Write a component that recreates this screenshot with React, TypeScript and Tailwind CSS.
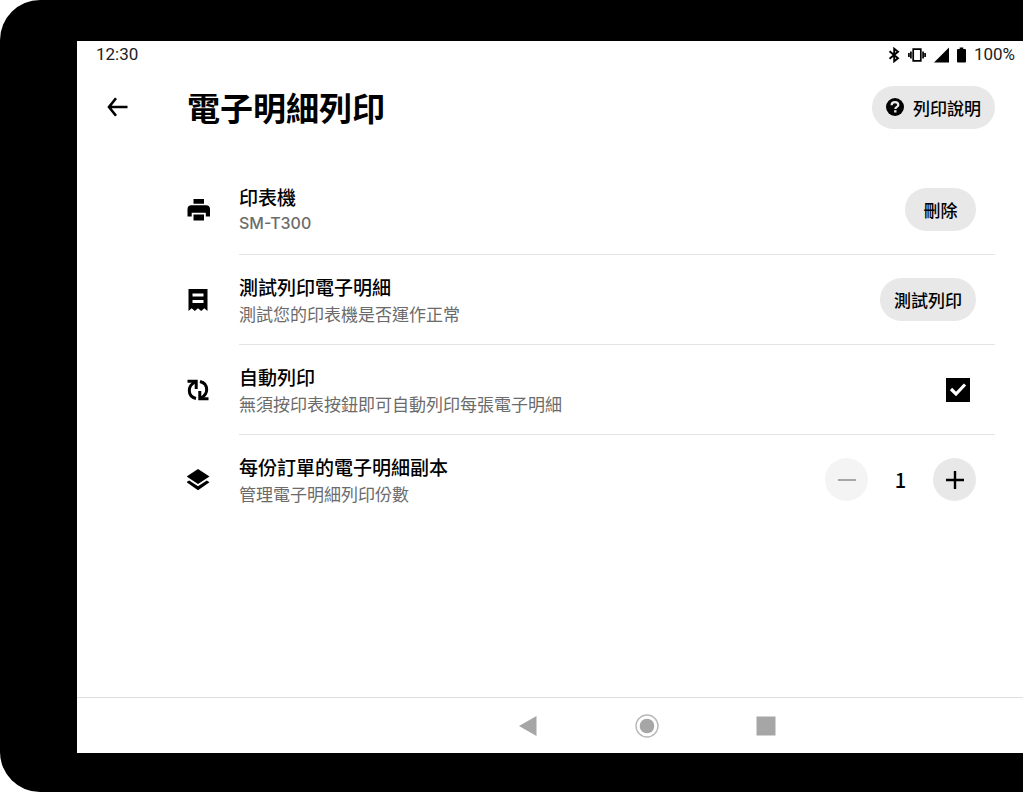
import type { ReactNode } from "react";
import { useState } from "react";

const BackArrowIcon = () => (
  <svg width="22" height="20" viewBox="0 0 22 20" fill="none" stroke="currentColor" strokeWidth="2.6" aria-hidden="true">
    <path d="M9 1.2 2 10l7 8.800M1.500 10H20.500" />
  </svg>
);

const HelpIcon = () => (
  <svg width="18" height="18" viewBox="0 0 18 18" aria-hidden="true">
    <circle cx="9" cy="9" r="9" fill="currentColor" />
    <path d="M5.600 7.200C5.600 5.200 7 4.200 9 4.200s3.300 1 3.300 2.700c0 2-3 2-3 4.100" fill="none" stroke="#e8e8e8" strokeWidth="2.200" />
    <rect x="8.100" y="12.200" width="2.400" height="2.300" fill="#e8e8e8" />
  </svg>
);

const PrinterIcon = () => (
  <svg width="24" height="24" viewBox="0 0 24 24" fill="currentColor" aria-hidden="true">
    <path d="M6.500 1h10.500v4.800h-10.500zM4.500 7.200h14.500a4 4 0 0 1 4 4v7.300h-4.200V14.700H4.700v3.800H.5v-7.300a4 4 0 0 1 4-4zM6.500 16.500h10.500v6h-10.500z" />
  </svg>
);

const ReceiptIcon = () => (
  <svg width="24" height="24" viewBox="0 0 24 24" fill="currentColor" aria-hidden="true">
    <path
      fillRule="evenodd"
      d="M1.500 1h19v22l-3.200-2.700-3.100 2.700-3.200-2.700L7.800 23l-3.100-2.700L1.500 23zM5.500 5.500v3h11v-3zm0 6.500v3h11v-3z"
    />
  </svg>
);

const SyncIcon = () => (
  <svg width="24" height="24" viewBox="0 0 24 24" fill="none" stroke="currentColor" strokeWidth="3" aria-hidden="true">
    <path d="M9 20.500C5 19.500 2.300 16.500 2.300 12.500c0-3.500 2-6.500 5.700-8.500" />
    <path d="M.5 3.200h8.700V11" />
    <path d="M13 3.500c4 1 6.700 4 6.700 8 0 3.500-2 6.500-5.700 8.500" />
    <path d="M21.500 20.800h-8.700V13" />
  </svg>
);

const LayersIcon = () => (
  <svg width="24" height="24" viewBox="0 0 24 24" fill="currentColor" aria-hidden="true">
    <path d="M11 1 22.500 8.500 11 16-.5 8.500zM-.5 14.200l2.700-1.800L11 18.300l8.800-5.900 2.700 1.800L11 22.300z" />
  </svg>
);

const StatusIcons = () => (
  <>
    <svg width="12" height="16" viewBox="0 0 12 16" fill="none" stroke="currentColor" strokeWidth="1.900" aria-hidden="true">
      <path d="M1.500 4.200 10 11.300 6.200 14.300V1.700L10 4.700 1.500 11.800" />
    </svg>
    <svg width="18" height="16" viewBox="0 0 18 16" fill="none" stroke="currentColor" strokeWidth="1.700" aria-hidden="true">
      <path d="M5.200 2.200h7.600v11.600H5.200zM2.900 4.500v7M15.100 4.500v7M.9 6v4M17.100 6v4" />
    </svg>
    <svg width="15" height="16" viewBox="0 0 15 16" fill="currentColor" aria-hidden="true">
      <path d="M15 .5v15H0z" />
    </svg>
    <svg width="9" height="16" viewBox="0 0 9 16" fill="currentColor" aria-hidden="true">
      <path d="M2.700.5h3.600V2H8a1 1 0 0 1 1 1v11.500a1 1 0 0 1-1 1H1a1 1 0 0 1-1-1V3a1 1 0 0 1 1-1h1.700z" />
    </svg>
  </>
);

const pillClass =
  "h-[43px] min-w-[71px] rounded-full bg-[#e8e8e8] px-[14px] text-[17px] font-medium leading-none cursor-pointer";

type SettingRowProps = {
  icon: ReactNode;
  title: ReactNode;
  detail: string;
  detailClass?: string;
  children: ReactNode;
};

const SettingRow = ({ icon, title, detail, detailClass = "text-[17px]", children }: SettingRowProps) => (
  <li className="group flex items-center">
    <div className="w-[52px] shrink-0">{icon}</div>
    <div className="flex min-h-[90px] flex-1 items-center justify-between gap-4 border-b border-[#e4e4e4] pr-[19px] group-last:border-transparent">
      <div>
        <h2 className="text-[19px] font-medium leading-[27px]">{title}</h2>
        <p className={`leading-[27px] text-[#6b6b6b] ${detailClass}`}>{detail}</p>
      </div>
      {children}
    </div>
  </li>
);

export default function App() {
  const [autoPrint, setAutoPrint] = useState(true);
  const [copies, setCopies] = useState(1);

  return (
    <div className="min-h-screen bg-white pr-px font-['Noto_Sans_CJK_TC',sans-serif] text-black">
      <div className="flex min-h-screen flex-col rounded-l-[40px] bg-black pt-[41px] pb-[39px] pl-[77px]">
        <div className="flex flex-1 flex-col bg-white">
          <div className="flex h-7 items-center justify-between pr-2 pl-[19px] font-[Roboto,sans-serif] text-[17px] text-[#222222]">
            <span>12:30</span>
            <div className="flex items-center gap-2 text-black">
              <StatusIcons />
              <span className="text-[#222222]">100%</span>
            </div>
          </div>

          <header className="flex h-[76px] items-center pr-7 pl-[30px]">
            <button type="button" aria-label="返回" className="w-20 cursor-pointer">
              <BackArrowIcon />
            </button>
            <h1 className="flex-1 text-[33px] font-bold leading-10">電子明細列印</h1>
            <button type="button" className={`flex items-center gap-[9px] ${pillClass}`}>
              <HelpIcon />
              列印說明
            </button>
          </header>

          <main className="flex-1 pt-5 pr-7 pl-[110px]">
            <ul>
              <SettingRow
                icon={<PrinterIcon />}
                title="印表機"
                detail="SM-T300"
                detailClass="font-[Inter,sans-serif] text-[16px] font-medium"
              >
                <button type="button" className={pillClass}>
                  刪除
                </button>
              </SettingRow>
              <SettingRow icon={<ReceiptIcon />} title="測試列印電子明細" detail="測試您的印表機是否運作正常">
                <button type="button" className={pillClass}>
                  測試列印
                </button>
              </SettingRow>
              <SettingRow
                icon={<SyncIcon />}
                title={<label htmlFor="auto-print">自動列印</label>}
                detail="無須按印表按鈕即可自動列印每張電子明細"
              >
                <div className="mr-[6px] grid size-6 place-items-center">
                  <input
                    id="auto-print"
                    type="checkbox"
                    checked={autoPrint}
                    onChange={(e) => setAutoPrint(e.target.checked)}
                    className="peer col-start-1 row-start-1 size-6 appearance-none border-2 border-black checked:bg-black"
                  />
                  <svg
                    viewBox="0 0 24 24"
                    className="pointer-events-none invisible col-start-1 row-start-1 size-6 peer-checked:visible"
                    fill="none"
                    stroke="white"
                    strokeWidth="3.200"
                    aria-hidden="true"
                  >
                    <path d="M5 11l5 5 9-9.500" />
                  </svg>
                </div>
              </SettingRow>
              <SettingRow icon={<LayersIcon />} title="每份訂單的電子明細副本" detail="管理電子明細列印份數">
                <div className="flex items-center">
                  <button
                    type="button"
                    aria-label="減少"
                    disabled={copies <= 1}
                    onClick={() => setCopies(copies - 1)}
                    className="grid size-[43px] place-items-center rounded-full bg-[#e8e8e8] disabled:bg-[#f4f4f4] disabled:text-[#a6a6a6]"
                  >
                    <svg width="18" height="18" viewBox="0 0 18 18" stroke="currentColor" strokeWidth="2" aria-hidden="true">
                      <path d="M0 9h18" />
                    </svg>
                  </button>
                  <output className="w-[65px] text-center text-[20px] font-medium leading-none">{copies}</output>
                  <button
                    type="button"
                    aria-label="增加"
                    onClick={() => setCopies(copies + 1)}
                    className="grid size-[43px] place-items-center rounded-full bg-[#e8e8e8]"
                  >
                    <svg width="18" height="18" viewBox="0 0 18 18" stroke="currentColor" strokeWidth="2.400" aria-hidden="true">
                      <path d="M0 9h18M9 0v18" />
                    </svg>
                  </button>
                </div>
              </SettingRow>
            </ul>
          </main>

          <nav className="flex h-[56px] items-center justify-center gap-[95px] border-t border-[#dedede] pl-[194px] text-[#a6a6a6]">
            <button type="button" aria-label="上一頁">
              <svg width="24" height="24" viewBox="0 0 24 24" fill="currentColor" aria-hidden="true">
                <path d="M3 12 20.500 2v20z" />
              </svg>
            </button>
            <button type="button" aria-label="主畫面">
              <svg width="24" height="24" viewBox="0 0 24 24" fill="currentColor" aria-hidden="true">
                <circle cx="12" cy="12" r="7.300" />
                <circle cx="12" cy="12" r="11" fill="none" stroke="#b8b8b8" strokeWidth="1.400" />
              </svg>
            </button>
            <button type="button" aria-label="最近使用">
              <svg width="24" height="24" viewBox="0 0 24 24" fill="currentColor" aria-hidden="true">
                <path d="M2.500 2.500h19v19h-19z" />
              </svg>
            </button>
          </nav>
        </div>
      </div>
    </div>
  );
}
